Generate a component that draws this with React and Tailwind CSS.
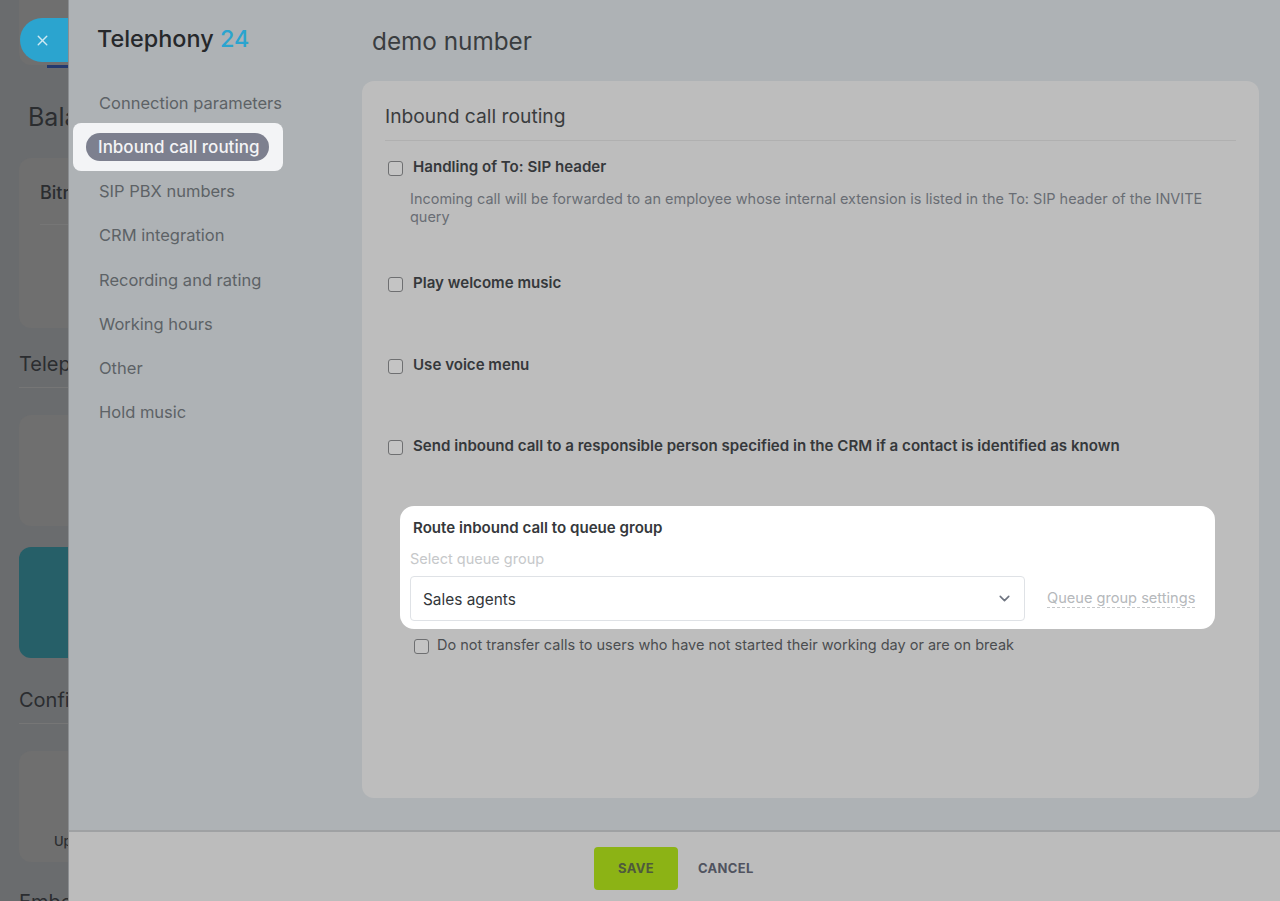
import { X, ChevronDown } from 'lucide-react'

const NAV = ['Connection parameters', 'Inbound call routing', 'SIP PBX numbers', 'CRM integration', 'Recording and rating', 'Working hours', 'Other', 'Hold music']

function Box({ className = '' }) {
  return <span className={'block h-[15px] w-[15px] shrink-0 rounded-[3px] border-[1.5px] border-[#6e6f71] bg-[#c4c4c4] ' + className} />
}

function Option({ label, className = '' }) {
  return (
    <div className={'flex items-center ' + className}>
      <Box className="mt-[3px] ml-[3px]" />
      <span className="ml-[10px] text-[15.1px] leading-[20px] font-semibold text-[#35383b]">{label}</span>
    </div>
  )
}

function Backdrop() {
  return (
    <div className="w-[68px] shrink-0 overflow-hidden bg-[#6a6c6e]">
      <div className="h-full w-[200px] pl-[19px] text-[#2b2d30]">
        <div className="h-[65px] rounded-b-xl bg-[#6f6f6f]" />
        <div className="ml-[28px] h-[3px] w-[40px] bg-[#23396e]" />
        <div className="mt-[33px] ml-[9px] text-[25px] leading-[32px]">Balance</div>
        <div className="mt-[25px] h-[170px] rounded-xl bg-[#6f6f6f] pt-[24px] pl-[21px]">
          <div className="text-[18px] leading-[22px] font-medium">Bitrix24</div>
          <div className="mt-[20px] h-px bg-[#767676]" />
        </div>
        <div className="mt-[23px] text-[20px] leading-[26px]">Telephony</div>
        <div className="mt-[10px] h-px bg-[#767676]" />
        <div className="mt-[27px] h-[111px] rounded-xl bg-[#6f6f6f]" />
        <div className="mt-[21px] h-[111px] rounded-xl bg-[#265f68]" />
        <div className="mt-[29px] text-[20px] leading-[26px]">Configure</div>
        <div className="mt-[10px] h-px bg-[#767676]" />
        <div className="mt-[27px] h-[111px] rounded-xl bg-[#6f6f6f] pt-[82px] pl-[35px] text-[13px] leading-[16px] font-medium">Upload</div>
        <div className="mt-[27px] text-[20px] leading-[26px]">Embed</div>
      </div>
    </div>
  )
}

export default function App() {
  return (
    <div className="relative flex h-[901px] w-[1280px] overflow-hidden font-['Inter',sans-serif]">
      <Backdrop />

      <div className="absolute top-[18px] left-[20px] flex h-[44px] w-[60px] items-center rounded-l-full bg-[#2ba4cf] pl-[14px] text-[#cfe9f2]">
        <X size={17} strokeWidth={2} />
      </div>

      <div className="relative flex min-w-0 flex-1 flex-col border-l border-[#8b8e91]">
        <div className="flex min-h-0 flex-1 bg-[#aeb2b5]">
          <aside className="w-[293px] shrink-0">
            <div className="mt-[24px] ml-[28px] text-[23.4px] leading-[30px] font-medium text-[#26282b]">
              Telephony <span className="text-[#2ba4cf]">24</span>
            </div>
            <div className="mt-[39px] flex flex-col">
              {NAV.map((item) =>
                item === 'Inbound call routing' ? (
                  <div key={item} className="z-10 mt-[-14.5px] mb-[10.25px] ml-[4px] w-[210px] rounded-lg bg-[#f3f4f6] px-[13px] py-[10px]">
                    <div className="flex h-[28px] w-[183px] items-center rounded-full bg-[#7d808f] pt-[1px] pl-[12px] text-[17px] font-medium whitespace-nowrap text-[#f4f4f6]">{item}</div>
                  </div>
                ) : (
                  <div key={item} className="ml-[30px] h-[44.25px] text-[16.5px] leading-[20px] text-[#5d6266]">{item}</div>
                )
              )}
            </div>
          </aside>

          <main className="min-w-0 flex-1 pr-[21px]">
            <h1 className="mt-[25px] ml-[10px] text-[24.3px] leading-[33px] text-[#3a3d40]">demo number</h1>
            <section className="mt-[23px] h-[717px] rounded-xl bg-[#bdbdbd] px-[23px] pt-[23px]">
              <h2 className="border-b border-[#b0b0b0] pb-[11px] text-[19.25px] leading-[25px] text-[#3a3c3e]">Inbound call routing</h2>

              <Option label="Handling of To: SIP header" className="mt-[16px]" />
              <p className="mt-[13px] ml-[25px] w-[810px] text-[14.47px] leading-[17.5px] text-[#696d74]">
                Incoming call will be forwarded to an employee whose internal extension is listed in the To: SIP header of the INVITE query
              </p>

              <Option label="Play welcome music" className="mt-[47.5px]" />
              <Option label="Use voice menu" className="mt-[62px]" />
              <Option label="Send inbound call to a responsible person specified in the CRM if a contact is identified as known" className="mt-[61px]" />

              <div className="mt-[50px] ml-[15px] h-[123px] w-[815px] rounded-[14px] bg-white px-[10px] pt-[12px]">
                <div className="ml-[3px] text-[15.1px] leading-[19px] font-semibold text-[#35383b]">Route inbound call to queue group</div>
                <div className="mt-[13px] text-[14.5px] leading-[17px] text-[#c6c8ca]">Select queue group</div>
                <div className="mt-[9px] flex items-center">
                  <div className="flex h-[45px] w-[615px] items-center justify-between rounded-[4px] border border-[#dfe2e6] pr-[11px] pl-[12px] text-[15.4px] text-[#33363a]">
                    <span className="pt-[3px]">Sales agents</span>
                    <ChevronDown size={17} strokeWidth={2.25} className="text-[#6e7480]" />
                  </div>
                  <span className="mt-[1px] ml-[22px] border-b border-dashed border-[#c6c8ca] text-[14.6px] leading-[17px] text-[#b5b8bb]">Queue group settings</span>
                </div>
              </div>

              <div className="mt-[6px] ml-[29px] flex items-center">
                <Box className="mt-[3px]" />
                <span className="ml-[8px] text-[14.5px] leading-[20px] text-[#4b4d50]">Do not transfer calls to users who have not started their working day or are on break</span>
              </div>
            </section>
          </main>
        </div>

        <footer className="flex h-[71px] shrink-0 items-center border-t-2 border-[#9fa1a3] bg-[#bcbcbc] pt-[4px] pl-[525px]">
          <button className="h-[43px] w-[84px] rounded-[4px] bg-[#8cb315] text-[13px] font-bold tracking-[0.3px] text-[#4f5a3d]">SAVE</button>
          <button className="ml-[20px] text-[13px] font-bold tracking-[0.3px] text-[#50535f]">CANCEL</button>
        </footer>
      </div>
    </div>
  )
}
